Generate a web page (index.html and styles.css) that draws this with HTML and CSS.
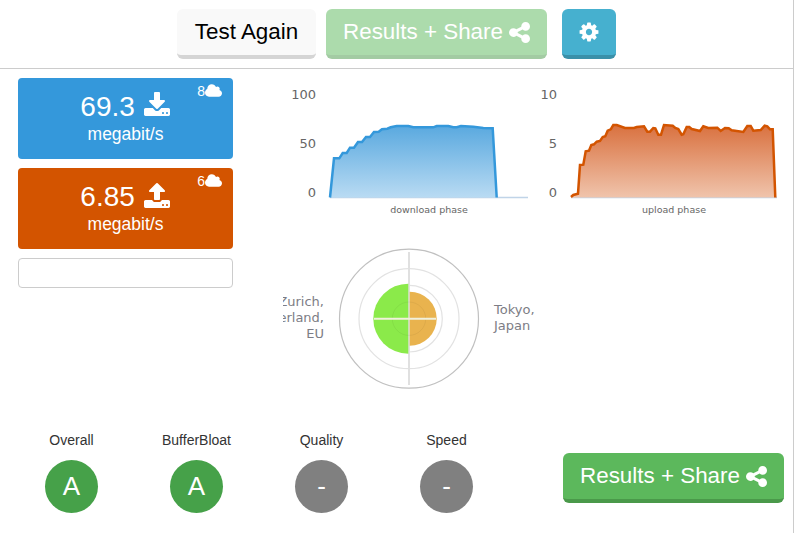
FILE: index.html
```html
<!DOCTYPE html>
<html lang="en">
<head>
<meta charset="utf-8">
<title>Speed test</title>
<link rel="stylesheet" href="styles.css">
</head>
<body>
<div class="page">
  <header class="topbar">
    <button class="btn btn-light btn-test">Test Again</button>
    <button class="btn btn-green btn-faded">Results + Share <svg class="ico-share" viewBox="0 0 1536 1792"><path d="M1216 1024q133 0 226.500 93.500t93.500 226.500-93.500 226.500-226.500 93.500-226.500-93.500-93.500-226.500q0-12 2-34l-360-180q-92 86-218 86-133 0-226.500-93.500t-93.500-226.500 93.500-226.500 226.500-93.500q126 0 218 86l360-180q-2-22-2-34 0-133 93.500-226.500t226.500-93.500 226.500 93.500 93.500 226.500-93.500 226.500-226.500 93.500q-126 0-218-86l-360 180q2 22 2 34t-2 34l360 180q92-86 218-86z"/></svg></button>
    <button class="btn btn-info" aria-label="Settings"><svg class="ico-cog" viewBox="0 0 1792 1792"><path d="M1152 896q0-106-75-181t-181-75-181 75-75 181 75 181 181 75 181-75 75-181zm512-109v222q0 12-8 23t-20 13l-185 28q-19 54-39 91 35 50 107 138 10 12 10 25t-9 23q-27 37-99 108t-94 71q-12 0-26-9l-138-108q-44 23-91 38-16 136-29 186-7 28-36 28h-222q-14 0-24.500-8.500t-11.500-21.500l-28-184q-49-16-90-37l-141 107q-10 9-25 9-14 0-25-11-126-114-165-168-7-10-7-23 0-12 8-23 15-21 51-66.500t54-70.500q-27-50-41-99l-183-27q-13-2-21-12.500t-8-23.500v-222q0-12 8-23t19-13l186-28q14-46 39-92-40-57-107-138-10-12-10-24 0-10 9-23 26-36 98.500-107.500t94.500-71.500q13 0 26 10l138 107q44-23 91-38 16-136 29-186 7-28 36-28h222q14 0 24.500 8.500t11.500 21.500l28 184q49 16 90 37l142-107q9-9 24-9 13 0 25 10 129 119 165 170 7 8 7 22 0 12-8 23-15 21-51 66.500t-54 70.500q26 50 41 98l183 28q13 2 21 12.500t8 23.500z"/></svg></button>
  </header>

  <main class="main">
    <section class="speeds">
      <div class="card card-down">
        <div class="badge">8<svg class="ico-cloud" viewBox="0 0 1920 1792"><path d="M1920 1152q0 159-112.500 271.500t-271.500 112.500h-1088q-185 0-316.500-131.500t-131.500-316.500q0-132 71-241.500t187-163.500q-2-28-2-43 0-212 150-362t362-150q158 0 286.500 88t187.500 230q70-62 166-62 106 0 181 75t75 181q0 75-41 138 129 30 213 134.500t84 239.500z"/></svg></div>
        <div class="value">69.3 <svg class="ico-xfer" viewBox="0 0 1792 1792"><path d="M1344 1344q0-26-19-45t-45-19-45 19-19 45 19 45 45 19 45-19 19-45zm256 0q0-26-19-45t-45-19-45 19-19 45 19 45 45 19 45-19 19-45zm128-224v320q0 40-28 68t-68 28h-1472q-40 0-68-28t-28-68v-320q0-40 28-68t68-28h465l135 136q58 56 136 56t136-56l136-136h464q40 0 68 28t28 68zm-325-569q17 41-14 70l-448 448q-18 19-45 19t-45-19l-448-448q-31-29-14-70 17-39 59-39h256v-448q0-26 19-45t45-19h256q26 0 45 19t19 45v448h256q42 0 59 39z"/></svg></div>
        <div class="unit">megabit/s</div>
      </div>
      <div class="card card-up">
        <div class="badge">6<svg class="ico-cloud" viewBox="0 0 1920 1792"><path d="M1920 1152q0 159-112.500 271.500t-271.500 112.500h-1088q-185 0-316.500-131.500t-131.500-316.500q0-132 71-241.500t187-163.500q-2-28-2-43 0-212 150-362t362-150q158 0 286.500 88t187.500 230q70-62 166-62 106 0 181 75t75 181q0 75-41 138 129 30 213 134.500t84 239.500z"/></svg></div>
        <div class="value">6.85 <svg class="ico-xfer" viewBox="0 0 1792 1792"><path d="M1344 1472q0-26-19-45t-45-19-45 19-19 45 19 45 45 19 45-19 19-45zm256 0q0-26-19-45t-45-19-45 19-19 45 19 45 45 19 45-19 19-45zm128-224v320q0 40-28 68t-68 28h-1472q-40 0-68-28t-28-68v-320q0-40 28-68t68-28h427q21 56 70.500 92t110.500 36h256q61 0 110.500-36t70.500-92h427q40 0 68 28t28 68zm-325-648q-17 40-59 40h-256v448q0 26-19 45t-45 19h-256q-26 0-45-19t-19-45v-448h-256q-42 0-59-40-17-39 14-69l448-448q18-19 45-19t45 19l448 448q31 30 14 69z"/></svg></div>
        <div class="unit">megabit/s</div>
      </div>
      <div class="empty-box"></div>
    </section>

    <section class="charts">
      <div class="chart-row">
        <svg class="chart" viewBox="280 75 250 150">
          <defs>
            <linearGradient id="gradDown" x1="0" y1="0" x2="0" y2="1"><stop offset="0" stop-color="#5aa9df"/><stop offset="1" stop-color="#b9dbf3"/></linearGradient>
            <linearGradient id="gradUp" x1="0" y1="0" x2="0" y2="1"><stop offset="0" stop-color="#d9713f"/><stop offset="1" stop-color="#f0c4ac"/></linearGradient>
          </defs>
          <text class="axis" x="316" y="99" text-anchor="end">100</text>
          <text class="axis" x="316" y="148" text-anchor="end">50</text>
          <text class="axis" x="316" y="197" text-anchor="end">0</text>
          <line class="baseline" x1="330" y1="197.500" x2="528" y2="197.500"/>
          <path fill="url(#gradDown)" d="M330 197.500L334 158.300 339.300 158.300 342.700 153 346.700 153 350 147.700 354 147.700 358 142 362 142 366 137 370 137 374 132 378.700 131.700 382 129.300 387.300 128.700 390.700 127.300 396.700 126 408.300 126 413.300 127.300 433.300 127.300 436.700 126 448.300 126 453.300 127.300 456.700 127.300 461 126 473.300 126.700 483.300 128 492.700 128.300 496.700 197.500Z"/>
          <polyline class="line-down" points="330,197.500 334,158.300 339.300,158.300 342.700,153 346.700,153 350,147.700 354,147.700 358,142 362,142 366,137 370,137 374,132 378.700,131.700 382,129.300 387.300,128.700 390.700,127.300 396.700,126 408.300,126 413.300,127.300 433.300,127.300 436.700,126 448.300,126 453.300,127.300 456.700,127.300 461,126 473.300,126.700 483.300,128 492.700,128.300 496.700,197.500"/>
          <text class="phase" x="429" y="213" text-anchor="middle">download phase</text>
        </svg>
        <svg class="chart" viewBox="530 75 250 150">
          <text class="axis" x="557" y="99" text-anchor="end">10</text>
          <text class="axis" x="557" y="148" text-anchor="end">5</text>
          <text class="axis" x="557" y="197" text-anchor="end">0</text>
          <line class="baseline" x1="571" y1="197.500" x2="777" y2="197.500"/>
          <path fill="url(#gradUp)" d="M571 197.500L573.300 195 578 193.700 580 165 583.300 164.700 585.700 151.300 589 150.700 591.300 145 594 144.300 596.700 141.700 600 141 602.700 137 605.300 136.300 607.700 130.700 610.700 129.300 613.300 125 616.700 125 625 128 634 128 636.700 127 644 126.300 647.300 131.700 650 131.700 653.300 128 655.300 128.300 658.300 134.700 661 134.700 664 125 672.700 125.700 675.300 128 678.300 129 681.700 134.700 683.300 134.300 686.700 127 689.300 127 691.700 129 700 131 703.300 126.300 708.300 128 717.300 127.700 720.700 131 725 128 728.700 128.300 731.700 130.300 743.300 132 747.300 126 750.700 126 753.300 130.700 760.700 130 764.700 125.700 767.300 126.300 770 129.300 772.700 129.300 775.300 197.500Z"/>
          <polyline class="line-up" points="571,197 573.300,195 578,193.700 580,165 583.300,164.700 585.700,151.300 589,150.700 591.300,145 594,144.300 596.700,141.700 600,141 602.700,137 605.300,136.300 607.700,130.700 610.700,129.300 613.300,125 616.700,125 625,128 634,128 636.700,127 644,126.300 647.300,131.700 650,131.700 653.300,128 655.300,128.300 658.300,134.700 661,134.700 664,125 672.700,125.700 675.300,128 678.300,129 681.700,134.700 683.300,134.300 686.700,127 689.300,127 691.700,129 700,131 703.300,126.300 708.300,128 717.300,127.700 720.700,131 725,128 728.700,128.300 731.700,130.300 743.300,132 747.300,126 750.700,126 753.300,130.700 760.700,130 764.700,125.700 767.300,126.300 770,129.300 772.700,129.300 775.300,197.500"/>
          <text class="phase" x="674" y="213" text-anchor="middle">upload phase</text>
        </svg>
      </div>
      <svg class="polar" viewBox="283 240 257 155">
        <circle class="ring-outer" cx="409" cy="318.700" r="69.500"/>
        <circle class="ring" cx="409" cy="318.700" r="50"/>
        <circle class="ring" cx="409" cy="318.700" r="33.300"/>
        <line class="spoke" x1="409" y1="252" x2="409" y2="385"/>
        <path class="wedge-left" d="M408.300 283.700A35 35 0 0 0 408.300 353.700Z"/>
        <path class="wedge-right" d="M409.700 291.700A27 27 0 0 1 409.700 345.700Z"/>
        <circle class="ring-inner" cx="409" cy="318.700" r="16.700"/>
        <line class="spoke-light" x1="374" y1="318.700" x2="436" y2="318.700"/>
        <text class="place" text-anchor="end"><tspan x="324" y="306">Zurich,</tspan><tspan x="324" y="322">Switzerland,</tspan><tspan x="324" y="338">EU</tspan></text>
        <text class="place"><tspan x="494" y="314">Tokyo,</tspan><tspan x="494" y="330">Japan</tspan></text>
      </svg>
    </section>
  </main>

  <footer class="bottom">
    <div class="grades">
      <div class="grade"><div class="grade-label">Overall</div><div class="grade-circle grade-a">A</div></div>
      <div class="grade"><div class="grade-label">BufferBloat</div><div class="grade-circle grade-a">A</div></div>
      <div class="grade"><div class="grade-label">Quality</div><div class="grade-circle grade-none">-</div></div>
      <div class="grade"><div class="grade-label">Speed</div><div class="grade-circle grade-none">-</div></div>
    </div>
    <button class="btn btn-green btn-bottom">Results + Share <svg class="ico-share" viewBox="0 0 1536 1792"><path d="M1216 1024q133 0 226.500 93.500t93.500 226.500-93.500 226.500-226.500 93.500-226.500-93.500-93.500-226.500q0-12 2-34l-360-180q-92 86-218 86-133 0-226.500-93.500t-93.500-226.500 93.500-226.500 226.500-93.500q126 0 218 86l360-180q-2-22-2-34 0-133 93.500-226.500t226.500-93.500 226.500 93.500 93.500 226.500-93.500 226.500-226.500 93.500q-126 0-218-86l-360 180q2 22 2 34t-2 34l360 180q92-86 218-86z"/></svg></button>
  </footer>
</div>
</body>
</html>
```
FILE: styles.css
```css
* { box-sizing: border-box; }
html, body { margin: 0; padding: 0; background: #fff; overflow: hidden; }
body { font-family: "Liberation Sans", Arial, sans-serif; color: #333; }

.page { width: 794px; height: 533px; border-right: 1px solid #ccc; }

.topbar {
  height: 69px;
  border-bottom: 1px solid #ccc;
  display: flex;
  align-items: flex-start;
  padding: 9px 0 0 177px;
  gap: 10px;
}

.btn {
  height: 50px;
  border: 0;
  border-bottom: 4px solid;
  border-radius: 6px;
  font: 22.4px/1 "Liberation Sans", Arial, sans-serif;
  color: #fff;
  padding: 0;
  display: flex;
  align-items: center;
  justify-content: center;
  gap: 6px;
}
.btn-light { width: 139px; background: #f9f9f9; border-color: #d5d5d5; color: #000; }
.btn-green { width: 221px; background: #5cb85c; border-color: #4a994a; }
.btn-faded { opacity: .5; }
.btn-info { width: 54px; margin-left: 5px; background: #46b0cf; border-color: #3a90a9; }
.btn-bottom { margin-top: 29px; }

.ico-share { width: 21px; height: 25px; fill: #fff; }
.ico-cog { width: 22px; height: 22px; fill: #fff; }

.main { display: flex; height: 326px; padding-left: 18px; }
.speeds { width: 215px; padding-top: 9px; display: flex; flex-direction: column; gap: 9px; }

.card {
  position: relative;
  height: 81px;
  border-radius: 4px;
  color: #fff;
  text-align: center;
  padding-top: 11px;
}
.card-down { background: #3498db; }
.card-up { background: #d35400; }
.value { font-size: 28px; line-height: 36px; height: 34px; }
.unit { font-size: 17.5px; line-height: 22px; }
.ico-xfer { width: 28px; height: 28px; fill: #fff; vertical-align: -4px; }
.badge {
  position: absolute;
  top: 5px;
  right: 11px;
  font-size: 14px;
  line-height: 16px;
  display: flex;
  align-items: center;
}
.ico-cloud { width: 17px; height: 16px; fill: #fff; }
.empty-box { height: 30px; border: 1px solid #ccc; border-radius: 4px; }

.charts { margin-left: 47px; padding-top: 6px; }
.chart-row { display: flex; }
.chart { display: block; width: 250px; height: 150px; }
.polar { display: block; width: 257px; height: 155px; margin: 15px 0 0 3px; }

.axis { font: 13px "DejaVu Sans", sans-serif; fill: #666; }
.phase { font: 9.5px "DejaVu Sans", sans-serif; fill: #666; }
.place { font: 13px "DejaVu Sans", sans-serif; fill: #7d7d85; }
.baseline { stroke: #c0d4e8; stroke-width: 1.500; }
.line-down { fill: none; stroke: #3498db; stroke-width: 2.500; }
.line-up { fill: none; stroke: #d35400; stroke-width: 2.500; }

.ring-outer { fill: none; stroke: #c0c0c0; stroke-width: 1.200; }
.ring { fill: none; stroke: #e2e2e2; stroke-width: 1.200; }
.ring-inner { fill: none; stroke: rgba(0,0,0,.05); stroke-width: 1; }
.spoke { stroke: #e0e0e0; stroke-width: 2; }
.spoke-light { stroke: #f0f0dc; stroke-width: 2; }
.wedge-left { fill: #8bea4a; }
.wedge-right { fill: #e9b34e; }

.bottom { display: flex; height: 138px; padding-top: 29px; }
.grades { display: flex; width: 563px; padding-left: 9px; }
.grade { width: 125px; text-align: center; }
.grade-label { font-size: 14px; line-height: 20px; height: 30px; margin-top: 6px; color: #333; }
.grade-circle {
  width: 53px;
  height: 53px;
  margin: 0 auto;
  border-radius: 50%;
  color: #fff;
  font-size: 26px;
  line-height: 53px;
}
.grade-a { background: #46a149; }
.grade-none { background: #808080; }
```
